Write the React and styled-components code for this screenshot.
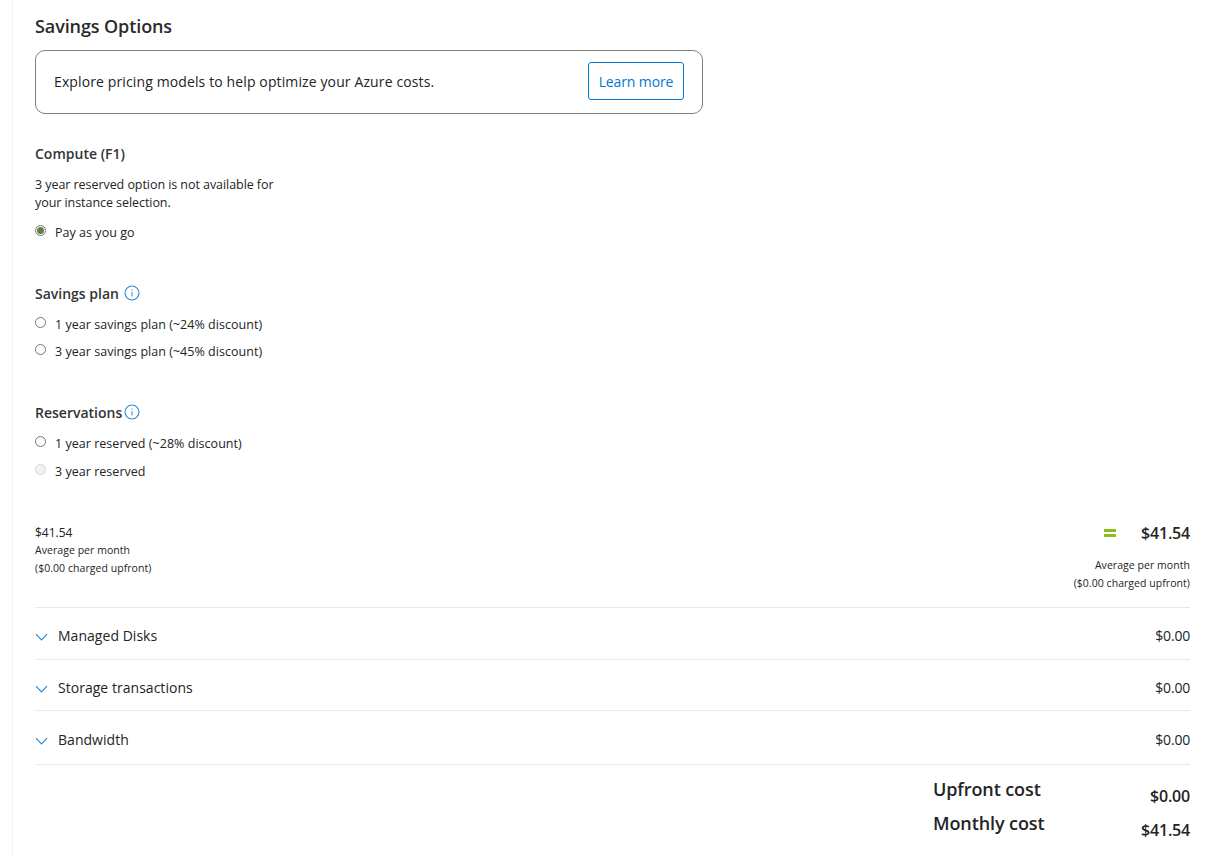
import styled, { createGlobalStyle } from "styled-components";

const GlobalStyle = createGlobalStyle`
  html, body {
    margin: 0;
    padding: 0;
    background: #ffffff;
    overflow: hidden;
  }
  body {
    font-family: "Open Sans", "Noto Sans", "Liberation Sans", sans-serif;
    color: #242424;
  }
`;

const Page = styled.div`
  margin-left: 12px;
  height: 857px;
  box-sizing: border-box;
  border-left: 1px solid #f2f2f2;
  padding: 14px 22px 0 22px;
`;

const Title = styled.h2`
  margin: 0;
  height: 24px;
  line-height: 24px;
  font-size: 18px;
  font-weight: 600;
  letter-spacing: -0.1px;
  color: #2b2b2b;
`;

const Banner = styled.div`
  box-sizing: border-box;
  width: 668px;
  height: 64px;
  margin-top: 12px;
  padding: 0 18px 2px;
  border: 1px solid #7f7f7f;
  border-radius: 10px;
  display: flex;
  align-items: center;
  justify-content: space-between;
  font-size: 14px;
  letter-spacing: 0.12px;
`;

const LearnButton = styled.button`
  box-sizing: border-box;
  width: 96px;
  height: 38px;
  padding: 0;
  background: #ffffff;
  border: 1px solid #0078d4;
  border-radius: 3px;
  color: #0078d4;
  font-family: inherit;
  font-size: 14px;
  letter-spacing: -0.12px;
`;

const Section = styled.section`
  margin-top: ${(p) => p.$top}px;
`;

const SectionHead = styled.div`
  display: flex;
  align-items: center;
  gap: ${(p) => p.$gap || 3}px;
  height: 20px;
  font-size: 14px;
  font-weight: 600;
  color: #333333;
`;

const Note = styled.p`
  margin: 13px 0 0 0;
  width: 250px;
  font-size: 12.5px;
  line-height: 18px;
  letter-spacing: -0.06px;
`;

const Option = styled.label`
  display: flex;
  align-items: center;
  gap: 9px;
  height: 18px;
  margin-top: ${(p) => p.$top}px;
  font-size: 12.5px;
  letter-spacing: 0.03px;
`;

const RadioDot = styled.span`
  box-sizing: border-box;
  flex: none;
  width: 11px;
  height: 11px;
  margin-top: -3px;
  border-radius: 50%;
  border: 1px solid ${(p) => (p.$disabled ? "#d4d4d4" : "#767676")};
  background: ${(p) => (p.$disabled ? "#f2f2f2" : "#ffffff")};
  display: flex;
  align-items: center;
  justify-content: center;

  &::after {
    content: "";
    display: ${(p) => (p.$checked ? "block" : "none")};
    width: 7px;
    height: 7px;
    border-radius: 50%;
    background: #647f45;
  }
`;

const PriceRow = styled.div`
  display: flex;
  justify-content: space-between;
  align-items: flex-start;
  margin-top: 44px;
  height: 83px;
  border-bottom: 1px solid #e8e8e8;
`;

const PriceLeft = styled.div`
  font-size: 12px;
  line-height: 17px;
`;

const SmallLine = styled.div`
  font-size: 10.5px;
  line-height: 18px;
  letter-spacing: 0.05px;
`;

const PriceRight = styled.div`
  margin-top: -1px;
  text-align: right;
`;

const TotalLine = styled.div`
  display: flex;
  justify-content: flex-end;
  align-items: center;
  gap: 25px;
  height: 20px;
  margin-bottom: 13px;
  font-size: 16px;
  font-weight: 600;
  letter-spacing: -0.2px;
`;

const EqualsSign = styled.span`
  width: 12px;
  height: 8px;
  border-top: 3px solid #8cbd18;
  border-bottom: 3px solid #8cbd18;
  box-sizing: border-box;
`;

const Row = styled.div`
  box-sizing: border-box;
  display: flex;
  align-items: center;
  justify-content: space-between;
  height: ${(p) => p.$height}px;
  padding-top: 4px;
  border-bottom: 1px solid #e8e8e8;
  font-size: 14px;
`;

const RowName = styled.div`
  display: flex;
  align-items: center;
  gap: 10px;
  letter-spacing: 0.03px;
`;

const RowValue = styled.span`
  letter-spacing: -0.2px;
`;

const Chevron = styled.svg`
  width: 13px;
  height: 8px;
  margin-top: 3px;
  fill: none;
  stroke: #2a8ad4;
  stroke-width: 1.2;
`;

const CostGrid = styled.div`
  display: grid;
  grid-template-columns: max-content 1fr;
  width: 257px;
  margin-left: auto;
  margin-top: 13px;
  row-gap: 11px;
`;

const CostName = styled.div`
  font-size: 18px;
  font-weight: 600;
  line-height: 22px;
  letter-spacing: -0.1px;
`;

const CostValue = styled.div`
  text-align: right;
  font-size: 16px;
  font-weight: 600;
  line-height: 22px;
  letter-spacing: -0.2px;
  padding-top: 7px;
  margin-bottom: -6px;
`;

const InfoIcon = () => (
  <svg width="16" height="16" viewBox="0 0 16 16" fill="none">
    <circle cx="8" cy="8" r="7" stroke="#2a8ad4" strokeWidth="1.1" />
    <rect x="7.5" y="7" width="1" height="4.5" fill="#2a8ad4" />
    <rect x="7.5" y="4.5" width="1" height="1.2" fill="#2a8ad4" />
  </svg>
);

const DownIcon = () => (
  <Chevron viewBox="0 0 13 8">
    <path d="M1 1.2 L6.5 6.8 L12 1.2" />
  </Chevron>
);

const App = () => {
  return (
    <Page>
      <GlobalStyle />
      <Title>Savings Options</Title>
      <Banner>
        <span>Explore pricing models to help optimize your Azure costs.</span>
        <LearnButton>Learn more</LearnButton>
      </Banner>

      <Section $top={29}>
        <SectionHead>Compute (F1)</SectionHead>
        <Note>3 year reserved option is not available for your instance selection.</Note>
        <Option $top={11}><RadioDot $checked />Pay as you go</Option>
      </Section>

      <Section $top={42}>
        <SectionHead $gap={5}>Savings plan<InfoIcon /></SectionHead>
        <Option $top={12}><RadioDot />1 year savings plan (~24% discount)</Option>
        <Option $top={9}><RadioDot />3 year savings plan (~45% discount)</Option>
      </Section>

      <Section $top={42}>
        <SectionHead $gap={2}>Reservations<InfoIcon /></SectionHead>
        <Option $top={12}><RadioDot />1 year reserved (~28% discount)</Option>
        <Option $top={10}><RadioDot $disabled />3 year reserved</Option>
      </Section>

      <PriceRow>
        <PriceLeft>
          $41.54
          <SmallLine>Average per month</SmallLine>
          <SmallLine>($0.00 charged upfront)</SmallLine>
        </PriceLeft>
        <PriceRight>
          <TotalLine><EqualsSign />$41.54</TotalLine>
          <SmallLine>Average per month</SmallLine>
          <SmallLine>($0.00 charged upfront)</SmallLine>
        </PriceRight>
      </PriceRow>

      <Row $height={52}><RowName><DownIcon />Managed Disks</RowName><RowValue>$0.00</RowValue></Row>
      <Row $height={51}><RowName><DownIcon />Storage transactions</RowName><RowValue>$0.00</RowValue></Row>
      <Row $height={54}><RowName><DownIcon />Bandwidth</RowName><RowValue>$0.00</RowValue></Row>

      <CostGrid>
        <CostName>Upfront cost</CostName>
        <CostValue>$0.00</CostValue>
        <CostName>Monthly cost</CostName>
        <CostValue>$41.54</CostValue>
      </CostGrid>
    </Page>
  );
};

export default App;
